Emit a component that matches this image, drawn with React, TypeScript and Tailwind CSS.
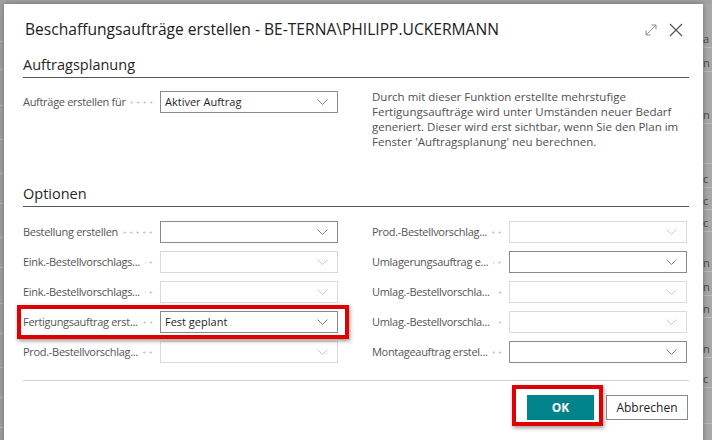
import React from 'react';

type Field = {
  label: string;
  value?: string;
  enabled: boolean;
};

const leftFields: Field[] = [
  { label: 'Bestellung erstellen', enabled: true },
  { label: 'Eink.-Bestellvorschlags...', enabled: false },
  { label: 'Eink.-Bestellvorschlags...', enabled: false },
  { label: 'Fertigungsauftrag erst...', value: 'Fest geplant', enabled: true },
  { label: 'Prod.-Bestellvorschlag...', enabled: false },
];

const rightFields: Field[] = [
  { label: 'Prod.-Bestellvorschlag...', enabled: false },
  { label: 'Umlagerungsauftrag e...', enabled: true },
  { label: 'Umlag.-Bestellvorschla...', enabled: false },
  { label: 'Umlag.-Bestellvorschla...', enabled: false },
  { label: 'Montageauftrag erstel...', enabled: true },
];

// rows of the list page peeking out behind the dialog on the right
const backRows = [
  { h: 'h-[44px]', ch: 'a' },
  { h: 'h-[24px]', ch: 'n' },
  { h: 'h-[52px]', ch: 'n' },
  { h: 'h-[40px]', ch: '' },
  { h: 'h-[24px]', ch: 'c' },
  { h: 'h-[22px]', ch: 'c' },
  { h: 'h-[22px]', ch: 'c' },
  { h: 'h-[40px]', ch: 'n' },
  { h: 'h-[24px]', ch: 'n' },
  { h: 'h-[22px]', ch: 'n' },
  { h: 'h-[40px]', ch: 'n' },
  { h: 'h-[30px]', ch: 'c' },
  { h: 'h-[36px]', ch: '' },
];

const Chevron = ({ enabled }: { enabled: boolean }) => (
  <svg width="11" height="6" viewBox="0 0 11 6" className="shrink-0">
    <polyline
      points="0.5,0.5 5.5,5.5 10.5,0.5"
      fill="none"
      stroke={enabled ? '#858585' : '#cacaca'}
      strokeWidth="1"
    />
  </svg>
);

const Leader = () => (
  <span className="h-[3px] flex-1 min-w-[4px] mr-[6px] ml-[5px] bg-[radial-gradient(circle,#c4c4c4_0.9px,transparent_1.2px)] bg-[length:6.5px_3px] bg-repeat-x bg-right" />
);

const SelectBox = ({ value, enabled }: { value?: string; enabled: boolean }) => (
  <div
    className={`w-[178px] h-[22px] flex items-center justify-between pl-[4px] pr-[9px] bg-white border ${
      enabled ? 'border-[#8a8a8a]' : 'border-[#dadada]'
    }`}
  >
    <span className="text-[11px] text-[#1f1f1f] whitespace-nowrap">{value ?? ''}</span>
    <Chevron enabled={enabled} />
  </div>
);

const FieldRow = ({ field }: { field: Field }) => (
  <div className="flex items-center h-[22px]">
    <div className="w-[137px] flex items-center">
      <span className="text-[11px] tracking-[-0.3px] text-[#555555] whitespace-nowrap">{field.label}</span>
      <Leader />
    </div>
    <SelectBox value={field.value} enabled={field.enabled} />
  </div>
);

const SectionHeader = ({ title }: { title: string }) => (
  <div className="border-b border-[#555555] pb-[2px] mr-[14px]">
    <h2 className="text-[14.5px] leading-[20px] text-[#262626] font-medium">{title}</h2>
  </div>
);

export default function App() {
  return (
    <div
      className="w-[712px] h-[440px] overflow-hidden bg-[#a3a3a3] flex pt-[4px]"
      style={{ fontFamily: '"Open Sans", "Noto Sans", sans-serif' }}
    >
      {/* page behind, left edge */}
      <div className="w-[4px] shrink-0 flex flex-col">
        {[38, 28, 36, 34, 34, 30, 34, 30, 36, 30, 34, 30, 30].map((h, i) => (
          <div key={i} className="border-b border-[#b8b8b8]" style={{ height: h }} />
        ))}
      </div>

      {/* dialog */}
      <div className="relative w-[699px] shrink-0 h-[460px] bg-white shadow-[0_0_6px_rgba(0,0,0,0.35)] pl-[19px]">
        <div className="flex items-center justify-between h-[51px] pr-[20px]">
          <h1 className="text-[15.6px] text-[#212121] pl-[2px]">
            Beschaffungsaufträge erstellen - BE-TERNA\PHILIPP.UCKERMANN
          </h1>
          <div className="flex items-center gap-[12px]">
            <svg width="12" height="12" viewBox="0 0 12 12">
              <g fill="none" stroke="#8a8a8a" strokeWidth="1">
                <line x1="1" y1="11" x2="11" y2="1" />
                <polyline points="6.5,1 11,1 11,5.5" />
                <polyline points="1,6.5 1,11 5.5,11" />
              </g>
            </svg>
            <svg width="14" height="14" viewBox="0 0 14 14">
              <g fill="none" stroke="#505050" strokeWidth="1.1">
                <line x1="1" y1="1" x2="13" y2="13" />
                <line x1="13" y1="1" x2="1" y2="13" />
              </g>
            </svg>
          </div>
        </div>

        {/* Auftragsplanung */}
        <SectionHeader title="Auftragsplanung" />
        <div className="grid grid-cols-[316px_317px] gap-x-[33px] pt-[13px] h-[106px]">
          <FieldRow field={{ label: 'Aufträge erstellen für', value: 'Aktiver Auftrag', enabled: true }} />
          <p className="text-[11.5px] leading-[15px] text-[#505050] -mt-[2px] whitespace-nowrap">
            Durch mit dieser Funktion erstellte mehrstufige
            <br />
            Fertigungsaufträge wird unter Umständen neuer Bedarf
            <br />
            generiert. Dieser wird erst sichtbar, wenn Sie den Plan im
            <br />
            Fenster 'Auftragsplanung' neu berechnen.
          </p>
        </div>

        {/* Optionen */}
        <SectionHeader title="Optionen" />
        <div className="grid grid-cols-[316px_317px] gap-x-[33px] pt-[14px]">
          <div className="flex flex-col gap-[8px]">
            {leftFields.map((f, i) => (
              <FieldRow key={i} field={f} />
            ))}
          </div>
          <div className="flex flex-col gap-[8px]">
            {rightFields.map((f, i) => (
              <FieldRow key={i} field={f} />
            ))}
          </div>
        </div>

        <div className="mt-[17px] mr-[14px] border-b border-[#cfcfcf]" />

        <div className="flex justify-end gap-[12px] pt-[14px] mr-[15px]">
          <button className="w-[67px] h-[25px] bg-[#00838a] text-white text-[12px] font-bold">OK</button>
          <button className="w-[82px] h-[25px] bg-white border border-[#8a8a8a] text-[12px] text-[#212121]">
            Abbrechen
          </button>
        </div>

        {/* red markers */}
        <div className="absolute left-[13px] top-[301px] w-[332px] h-[34px] border-[4px] border-[#e00000] shadow-[1px_2px_4px_rgba(0,0,0,0.4)]" />
        <div className="absolute left-[508px] top-[381px] w-[91px] h-[41px] border-[4px] border-[#e00000] shadow-[1px_2px_4px_rgba(0,0,0,0.4)]" />
      </div>

      {/* page behind, right edge */}
      <div className="flex-1 flex flex-col bg-[#a8a8a8]">
        {backRows.map((r, i) => (
          <div
            key={i}
            className={`${r.h} border-b border-[#bdbdbd] flex items-end pb-[3px] text-[11px] leading-none text-[#4a4a4a]`}
          >
            {r.ch}
          </div>
        ))}
      </div>
    </div>
  );
}
